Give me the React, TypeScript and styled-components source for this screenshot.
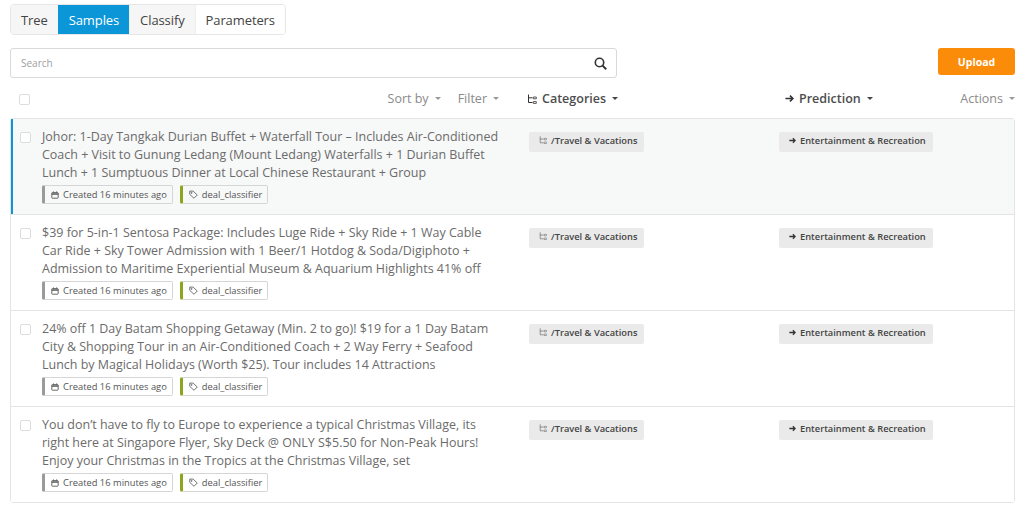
import { createGlobalStyle, styled } from 'styled-components';

const GlobalStyle = createGlobalStyle`
  html, body { margin: 0; padding: 0; background: #fff; }
  body {
    font-family: "Open Sans", "Liberation Sans", sans-serif;
    color: #555;
    -webkit-font-smoothing: antialiased;
  }
  * { box-sizing: border-box; }
`;

const Page = styled.div`
  width: 1024px;
  height: 514px;
  padding: 4px 9px 0 10px;
  overflow: hidden;
`;

const Tabs = styled.div`
  display: inline-flex;
  vertical-align: top;
  height: 31px;
  border: 1px solid #e6e6e6;
  border-radius: 4px;
  overflow: hidden;
`;

const Tab = styled.div<{ $active?: boolean; $plain?: boolean }>`
  display: flex;
  align-items: center;
  padding: 0 10px 0 ${(p) => (p.$active ? '11px' : '10px')};
  margin-left: ${(p) => (p.$active ? '-1px' : '0')};
  font-size: 13px;
  letter-spacing: -0.1px;
  color: ${(p) => (p.$active ? '#fff' : '#444')};
  background: ${(p) => (p.$active ? '#0b96d8' : p.$plain ? '#fff' : '#f6f6f6')};
  border-right: 1px solid #eee;
  &:last-child { border-right: 0; }
`;

const SearchRow = styled.div`
  display: flex;
  justify-content: space-between;
  margin-top: 13px;
`;

const SearchBox = styled.div`
  width: 607px;
  height: 30px;
  display: flex;
  align-items: center;
  justify-content: space-between;
  padding: 0 9px 0 10px;
  border: 1px solid #d9d9d9;
  border-radius: 3px;
  font-size: 10px;
  color: #a0a0a0;
`;

const UploadButton = styled.div`
  width: 77px;
  height: 27px;
  display: flex;
  align-items: center;
  justify-content: center;
  background: #fb8c0a;
  border-radius: 3px;
  color: #fff;
  font-size: 10.5px;
  font-weight: 700;
`;

const HeaderRow = styled.div`
  display: grid;
  grid-template-columns: 517px 258px 1fr auto;
  align-items: center;
  height: 40px;
  padding-top: 1px;
`;

const Check = styled.span`
  display: block;
  flex: none;
  width: 11px;
  height: 11px;
  border: 1px solid #ddd;
  border-radius: 2px;
  background: #fff;
`;

const HeaderLeft = styled.div`
  display: flex;
  align-items: center;
  justify-content: space-between;
  padding: 2px 28px 0 9px;
`;

const SortGroup = styled.div`
  display: flex;
  gap: 17px;
  margin-top: -2px;
`;

const Muted = styled.div`
  display: flex;
  align-items: center;
  gap: 5px;
  font-size: 12.5px;
  color: #8a8a8a;
`;

const ColumnTitle = styled.div`
  display: flex;
  align-items: center;
  gap: 5px;
  font-size: 12.5px;
  font-weight: 600;
  color: #4d4d4d;
`;

const Caret = styled.span<{ $dark?: boolean }>`
  width: 0;
  height: 0;
  margin-left: 1px;
  border-left: 3px solid transparent;
  border-right: 3px solid transparent;
  border-top: 3px solid ${(p) => (p.$dark ? '#444' : '#999')};
`;

const List = styled.div`
  width: 1005px;
  border: 1px solid #e4e4e4;
  border-radius: 3px;
`;

const Row = styled.div<{ $selected?: boolean }>`
  display: grid;
  grid-template-columns: 518px 250px 1fr;
  height: 96px;
  background: ${(p) => (p.$selected ? '#f7f8f8' : '#fff')};
  border-top: 1px solid #e4e4e4;
  box-shadow: ${(p) => (p.$selected ? 'inset 2px 0 0 #0b96d8' : 'none')};
  &:first-child { border-top: 0; height: 95px; }
`;

const SampleCell = styled.div`
  display: flex;
  gap: 11px;
  padding: 9px 0 0 9px;
`;

const CheckSlot = styled.div`
  padding-top: 4px;
`;

const SampleBody = styled.div`
  width: 470px;
`;

const SampleText = styled.div`
  font-size: 12.47px;
  line-height: 18px;
  color: #6b6b6b;
  white-space: nowrap;
`;

const Meta = styled.div`
  display: flex;
  gap: 7px;
  margin-top: 3px;
`;

const MetaTag = styled.div<{ $accent: string }>`
  display: flex;
  align-items: center;
  gap: 4px;
  height: 19px;
  padding: 0 5px 0 6px;
  border: 1px solid #d5d5d5;
  border-left: 3px solid ${(p) => p.$accent};
  border-radius: 2px;
  font-size: 9.35px;
  color: #555;
  white-space: nowrap;
`;

const PillCell = styled.div`
  padding-top: 8px;
`;

const Pill = styled.div`
  display: inline-flex;
  align-items: center;
  gap: 4px;
  height: 20px;
  padding: 0 7px 3px 10px;
  border-radius: 2px;
  background: #eaeaea;
  font-size: 9.3px;
  font-weight: 600;
  color: #444;
  white-space: nowrap;
`;

function SearchIcon() {
  return (
    <svg width="13" height="13" viewBox="0 0 13 13" fill="none" stroke="#333" strokeWidth="1.6">
      <circle cx="5.5" cy="5.5" r="4.2" />
      <path d="M8.6 8.6 12.2 12.2" strokeWidth="2" />
    </svg>
  );
}

function TreeIcon({ size = 8, color = '#777' }: { size?: number; color?: string }) {
  return (
    <svg width={size} height={size} viewBox="0 0 10 10" fill="none" stroke={color} strokeWidth="1">
      <path d="M1.5 0.5V8.5H5.5M1.5 3.8H5.5" />
      <path d="M6.3 3H9.3V4.8H6.3ZM6.3 7.6H9.3V9.4H6.3Z" strokeWidth="0.8" />
    </svg>
  );
}

function ArrowIcon({ size = 7, color = '#333' }: { size?: number; color?: string }) {
  return (
    <svg width={size} height={size} viewBox="0 0 10 10" fill="none" stroke={color} strokeWidth="1.8">
      <path d="M0.5 5H8.5M5.5 1.8 8.8 5 5.5 8.2" />
    </svg>
  );
}

function CalendarIcon() {
  return (
    <svg width="8" height="8" viewBox="0 0 10 10" fill="none" stroke="#555" strokeWidth="1.1">
      <rect x="1" y="2" width="8" height="7" rx="0.8" />
      <path d="M1 3.8H9" strokeWidth="1.8" />
      <path d="M3 0.5V2M7 0.5V2" />
    </svg>
  );
}

function TagIcon() {
  return (
    <svg width="9" height="9" viewBox="0 0 10 10" fill="none" stroke="#555" strokeWidth="0.9">
      <path d="M0.8 1.2H4.6L9.2 5.6 5.6 9.2 0.8 4.8Z" />
      <circle cx="2.9" cy="3.2" r="0.6" />
    </svg>
  );
}

const samples = [
  [
    'Johor: 1-Day Tangkak Durian Buffet + Waterfall Tour – Includes Air-Conditioned',
    'Coach + Visit to Gunung Ledang (Mount Ledang) Waterfalls + 1 Durian Buffet',
    'Lunch + 1 Sumptuous Dinner at Local Chinese Restaurant + Group',
  ],
  [
    '$39 for 5-in-1 Sentosa Package: Includes Luge Ride + Sky Ride + 1 Way Cable',
    'Car Ride + Sky Tower Admission with 1 Beer/1 Hotdog & Soda/Digiphoto +',
    'Admission to Maritime Experiential Museum & Aquarium Highlights 41% off',
  ],
  [
    '24% off 1 Day Batam Shopping Getaway (Min. 2 to go)! $19 for a 1 Day Batam',
    'City & Shopping Tour in an Air-Conditioned Coach + 2 Way Ferry + Seafood',
    'Lunch by Magical Holidays (Worth $25). Tour includes 14 Attractions',
  ],
  [
    'You don’t have to fly to Europe to experience a typical Christmas Village, its',
    'right here at Singapore Flyer, Sky Deck @ ONLY S$5.50 for Non-Peak Hours!',
    'Enjoy your Christmas in the Tropics at the Christmas Village, set',
  ],
];

export default function App() {
  return (
    <Page>
      <GlobalStyle />
      <Tabs>
        <Tab>Tree</Tab>
        <Tab $active>Samples</Tab>
        <Tab>Classify</Tab>
        <Tab $plain>Parameters</Tab>
      </Tabs>
      <SearchRow>
        <SearchBox>
          Search
          <SearchIcon />
        </SearchBox>
        <UploadButton>Upload</UploadButton>
      </SearchRow>
      <HeaderRow>
        <HeaderLeft>
          <Check />
          <SortGroup>
            <Muted>Sort by <Caret /></Muted>
            <Muted>Filter <Caret /></Muted>
          </SortGroup>
        </HeaderLeft>
        <ColumnTitle><TreeIcon size={10} color="#333" /> Categories <Caret $dark /></ColumnTitle>
        <ColumnTitle><ArrowIcon size={9} /> Prediction <Caret $dark /></ColumnTitle>
        <Muted>Actions <Caret /></Muted>
      </HeaderRow>
      <List>
        {samples.map((lines, i) => (
          <Row key={lines[0]} $selected={i === 0}>
            <SampleCell>
              <CheckSlot><Check /></CheckSlot>
              <SampleBody>
                <SampleText>
                  {lines.map((line) => <div key={line}>{line}</div>)}
                </SampleText>
                <Meta>
                  <MetaTag $accent="#9a9a9a"><CalendarIcon /> Created 16 minutes ago</MetaTag>
                  <MetaTag $accent="#8aa51e"><TagIcon /> deal_classifier</MetaTag>
                </Meta>
              </SampleBody>
            </SampleCell>
            <PillCell>
              <Pill><TreeIcon /> /Travel &amp; Vacations</Pill>
            </PillCell>
            <PillCell>
              <Pill><ArrowIcon /> Entertainment &amp; Recreation</Pill>
            </PillCell>
          </Row>
        ))}
      </List>
    </Page>
  );
}
